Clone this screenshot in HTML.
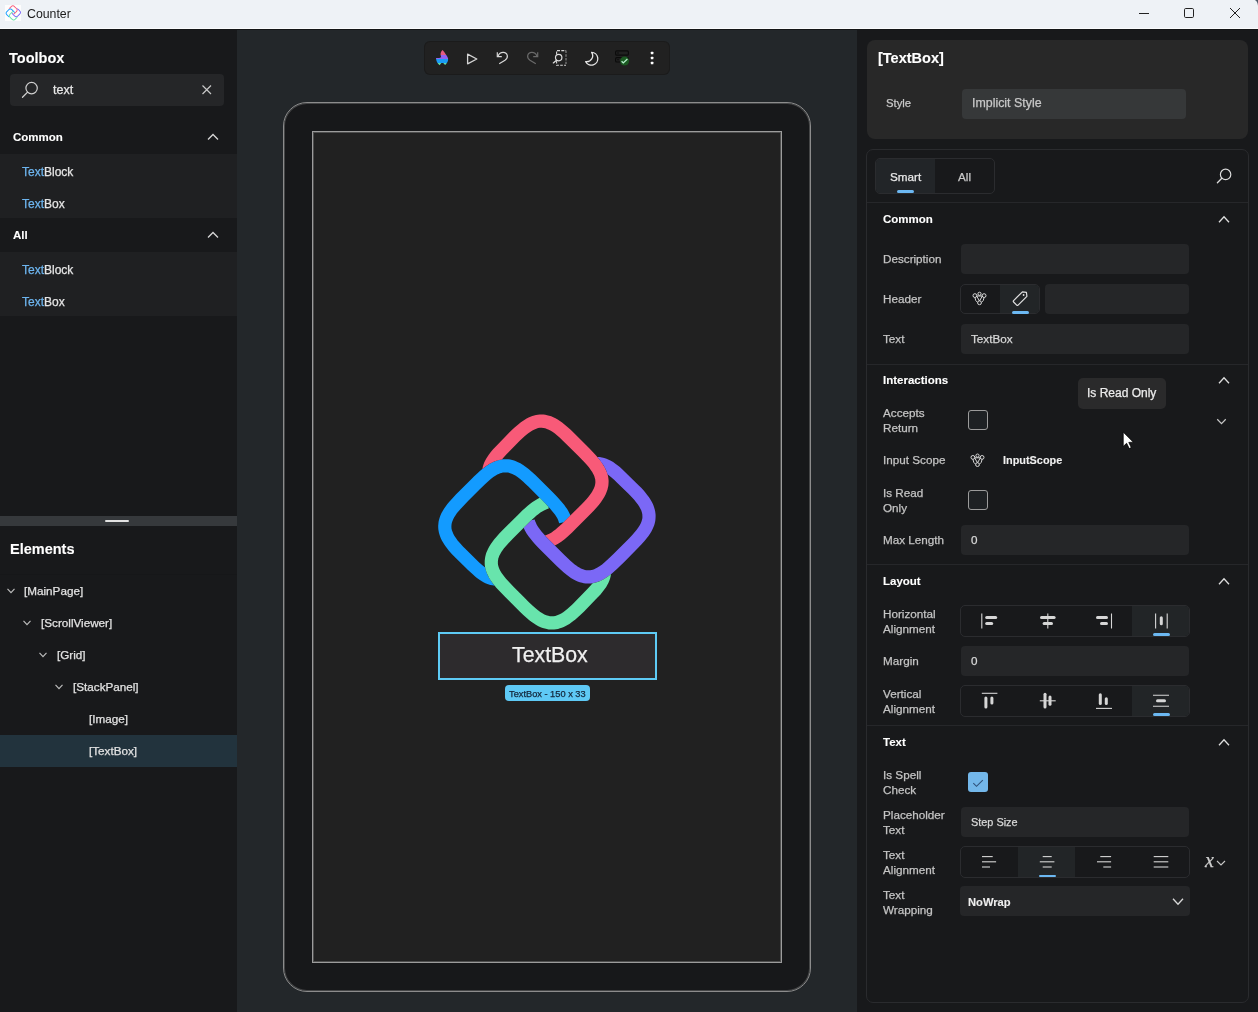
<!DOCTYPE html>
<html><head><meta charset="utf-8">
<style>
*{box-sizing:border-box;margin:0;padding:0}
html,body{width:1258px;height:1012px;overflow:hidden;background:#191a1c;font-family:"Liberation Sans",sans-serif;color:#e6e6e6;position:relative}
.a{position:absolute}
.t{position:absolute;white-space:nowrap;line-height:1;will-change:transform;-webkit-text-stroke:0.25px currentColor}
svg{position:absolute;overflow:visible}
</style></head><body>
<div class="a" style="left:0px;top:0px;width:1258px;height:29px;background:#eef2f6;border-radius:0px;"></div>
<div class="a" style="left:0px;top:28px;width:1258px;height:1px;background:#fafbfc;border-radius:0px;"></div>
<div class="a" style="left:0px;top:29px;width:237px;height:983px;background:#18191b;border-radius:0px;"></div>
<div class="a" style="left:237px;top:29px;width:620px;height:983px;background:#23272a;border-radius:0px;"></div>
<div class="a" style="left:857px;top:29px;width:401px;height:983px;background:#18191b;border-radius:0px;"></div>
<div class="a" style="left:0px;top:29px;width:1258px;height:1px;background:#131516;border-radius:0px;"></div>
<svg style="left:1250px;top:0px;" width="8" height="8" viewBox="1250 0 8 8"><path d="M1254.8 0 Q1257.6 1.2 1258 5.8 V0 Z" fill="#505a6a"/></svg>
<svg style="left:5px;top:5px;" width="16" height="16" viewBox="5 5 16 16"><rect x="5" y="5" width="16" height="16" fill="#fdfdfd"/><g transform="translate(5.6 5.2) scale(0.0705) translate(-438 -413)"><path d="M485.2 567.6L482.4 565.3L479.2 562.4L465.3 548.8L463.2 546.7L461.2 544.6L459.2 542.3L457.6 540.4L455.9 538.1L454.5 536.0L453.4 534.0L452.6 532.1L451.9 530.2L451.5 528.4L451.4 526.6L451.5 524.8L451.8 523.0L452.4 521.2L453.1 519.4L454.2 517.3L455.4 515.4L457.0 513.1L458.8 510.9L461.0 508.4L464.3 504.9L468.3 500.7L479.8 489.3L485.0 484.2L488.0 481.5L490.8 479.1L493.3 477.1L495.8 475.5L497.3 474.6L498.7 473.9L500.2 473.3L501.5 472.9L502.9 472.6L504.2 472.4L505.5 472.4L506.8 472.4L508.1 472.6L509.5 472.9L510.9 473.4L512.3 474.0L513.8 474.7L515.3 475.6L516.8 476.6L518.5 477.8L520.7 479.6L523.0 481.6L525.6 483.9L528.6 486.8L543.7 501.9L547.3 505.6L550.2 508.7L552.0 510.9L553.7 512.9L555.1 514.8L556.2 516.6L557.3 518.3L558.1 520.1L558.7 521.7L559.1 523.3L563.6 522.3L570.5 515.5L569.7 513.7L568.8 512.0L567.9 510.3L566.8 508.6L565.6 506.9L564.3 505.0L561.1 501.2L557.8 497.5L553.5 493.0L540.7 480.2L535.4 475.1L532.0 471.9L528.9 469.2L525.9 466.9L523.1 465.0L520.4 463.3L517.5 461.9L514.9 460.8L512.2 460.0L510.3 459.6L508.5 459.3L506.6 459.2L504.9 459.2L503.0 459.3L501.2 459.5L499.3 459.9L497.5 460.3L495.6 461.0L493.8 461.7L491.9 462.6L490.1 463.5L488.2 464.7L486.3 465.9L484.3 467.4L482.3 469.0L479.9 471.0L477.2 473.5L474.2 476.3L470.5 479.9L455.9 494.5L452.3 498.4L449.3 501.7L447.4 504.0L445.6 506.4L444.0 508.7L442.7 510.9L441.5 513.1L440.5 515.3L439.7 517.5L439.1 519.6L438.6 521.6L438.4 523.5L438.2 525.4L438.2 527.2L438.3 529.1L438.6 531.1L439.0 533.0L439.6 535.0L440.2 536.8L441.0 538.7L442.0 540.7L443.1 542.5L444.3 544.6L445.7 546.5L447.2 548.5L448.9 550.7L451.8 553.9L454.5 556.7L468.0 570.0L473.0 574.6L475.1 576.5L477.3 578.2L479.5 579.8L481.8 581.2L483.9 582.4L486.0 583.4L488.1 584.2L490.3 584.9L492.4 585.3L494.7 585.7L492.8 583.4L491.1 581.0L489.7 578.8L488.4 576.5L487.4 574.4L486.5 572.3L485.8 570.0L485.2 567.6Z" fill="#139bff"/><path d="M501.9 459.4L504.0 456.9L506.5 454.3L520.0 440.5L521.9 438.7L524.3 436.5L526.4 434.7L528.3 433.2L530.5 431.7L532.4 430.5L534.5 429.4L536.3 428.7L538.1 428.1L539.9 427.8L541.6 427.8L543.4 427.9L545.1 428.3L546.9 428.9L548.8 429.7L550.8 430.8L552.8 432.1L554.9 433.6L557.2 435.4L559.6 437.6L563.1 440.9L567.5 445.2L578.4 456.1L583.5 461.3L586.3 464.3L588.7 467.1L590.6 469.7L592.2 472.1L593.1 473.7L593.8 475.1L594.4 476.5L594.8 477.9L595.2 479.2L595.3 480.6L595.4 481.9L595.3 483.2L595.1 484.5L594.8 485.9L594.3 487.2L593.7 488.7L593.0 490.1L592.1 491.7L591.1 493.2L590.0 494.7L588.3 496.9L586.4 499.2L584.1 501.7L581.2 504.7L566.3 519.6L562.4 523.4L559.5 526.1L557.2 528.1L555.3 529.7L553.4 531.1L551.6 532.4L549.8 533.4L548.1 534.3L546.5 534.9L544.9 535.4L548.8 539.4L554.9 545.6L558.1 543.8L561.3 541.7L564.6 539.2L568.3 536.0L572.1 532.4L577.0 527.6L588.5 516.1L593.7 510.7L596.4 507.7L598.8 504.9L600.9 502.3L602.7 499.6L604.3 497.1L605.6 494.5L606.6 492.0L607.5 489.6L607.9 487.7L608.3 485.9L608.5 484.0L608.6 482.1L608.6 480.3L608.4 478.4L608.1 476.5L607.7 474.7L607.1 472.8L606.4 471.0L605.6 469.2L604.7 467.3L603.6 465.4L602.4 463.5L601.1 461.6L599.5 459.6L597.6 457.3L595.4 454.7L592.8 452.0L589.5 448.5L574.2 433.3L570.4 429.5L566.9 426.4L564.5 424.4L562.1 422.5L559.9 421.0L557.7 419.5L555.5 418.3L553.3 417.2L551.2 416.3L549.1 415.7L547.1 415.2L545.3 414.8L543.4 414.6L541.6 414.6L539.7 414.6L537.8 414.8L536.0 415.1L534.1 415.5L532.3 416.1L530.4 416.8L528.6 417.6L526.6 418.6L524.7 419.7L522.8 420.9L520.9 422.3L518.8 423.9L516.7 425.7L514.3 427.7L512.1 429.8L509.8 432.0L496.3 445.9L493.1 449.3L490.8 452.1L489.1 454.2L487.6 456.4L486.3 458.4L485.2 460.6L484.2 462.6L483.4 464.7L482.8 466.8L482.4 468.9L484.8 467.0L487.3 465.3L489.6 463.8L492.1 462.5L494.2 461.5L496.3 460.7L499.1 459.9L501.9 459.4Z" fill="#f85a78"/><path d="M607.5 474.3L610.9 476.9L614.1 479.8L616.6 482.2L628.0 493.2L630.2 495.5L632.1 497.5L634.4 500.0L636.1 502.2L637.9 504.5L639.2 506.6L640.4 508.7L641.3 510.6L641.9 512.5L642.3 514.3L642.4 516.1L642.4 517.9L642.0 519.7L641.5 521.6L640.7 523.4L639.6 525.5L638.3 527.5L636.7 529.7L634.8 532.1L632.5 534.7L629.0 538.4L624.5 543.0L613.2 554.3L608.2 559.1L604.9 562.1L602.1 564.4L599.5 566.3L597.0 567.8L595.5 568.6L594.2 569.2L592.8 569.7L591.5 570.0L590.2 570.2L588.9 570.3L587.6 570.3L586.3 570.2L585.0 569.9L583.7 569.5L582.3 569.0L580.9 568.4L579.4 567.6L577.9 566.7L576.3 565.6L574.7 564.4L572.7 562.7L570.4 560.8L567.8 558.3L564.9 555.5L549.8 540.5L546.3 536.9L543.5 533.8L541.7 531.7L540.0 529.6L538.7 527.8L537.5 526.0L536.5 524.2L535.8 522.6L535.1 521.0L534.7 519.4L521.8 522.3L531.4 520.2L523.6 527.8L524.9 530.5L526.6 533.4L528.5 536.2L530.7 539.1L532.9 541.7L535.3 544.4L538.1 547.4L541.6 551.0L556.7 565.9L560.5 569.5L563.8 572.5L566.3 574.5L568.6 576.3L570.9 577.9L573.1 579.2L575.5 580.4L577.6 581.4L579.8 582.2L582.0 582.8L583.8 583.2L585.7 583.4L587.6 583.5L589.3 583.5L591.2 583.4L593.0 583.1L594.9 582.8L596.7 582.3L598.6 581.6L600.4 580.9L602.2 580.0L604.1 579.0L606.0 577.8L607.9 576.5L609.9 575.1L611.9 573.4L614.4 571.3L617.2 568.8L620.3 565.8L624.5 561.7L638.2 547.8L641.8 544.1L644.7 540.8L646.7 538.3L648.5 536.0L650.0 533.7L651.4 531.5L652.5 529.3L653.5 527.1L654.3 524.9L654.9 522.7L655.3 520.7L655.5 518.7L655.6 516.8L655.6 514.8L655.4 512.9L655.1 510.9L654.6 508.9L654.0 506.9L653.3 505.0L652.4 503.0L651.3 501.0L650.1 499.0L648.8 497.0L647.2 494.9L645.5 492.8L643.7 490.6L641.2 487.8L638.8 485.4L625.0 471.9L622.2 469.2L619.8 467.1L617.5 465.2L615.4 463.7L613.1 462.1L610.9 460.8L608.7 459.7L606.5 458.8L604.2 458.0L602.0 457.5L599.7 457.1L597.3 456.9L599.1 459.1L600.9 461.4L602.3 463.4L603.7 465.5L604.7 467.4L605.7 469.2L606.7 471.8L607.5 474.3Z" fill="#7b68f6"/><path d="M592.6 583.2L590.2 586.0L587.4 589.1L573.8 603.1L571.8 605.0L569.5 607.1L567.3 609.0L565.4 610.5L563.2 612.2L561.2 613.4L559.1 614.5L557.2 615.3L555.3 615.9L553.5 616.3L551.7 616.3L550.0 616.2L548.2 615.8L546.3 615.2L544.4 614.4L542.4 613.3L540.3 611.9L538.0 610.2L535.6 608.2L533.0 606.0L529.2 602.4L523.8 597.0L513.5 586.7L508.6 581.6L505.8 578.5L503.5 575.6L501.6 573.0L500.1 570.4L499.4 569.0L498.9 567.7L498.4 566.3L498.1 565.0L497.9 563.8L497.9 562.5L497.9 561.2L498.1 559.9L498.3 558.6L498.8 557.3L499.3 555.8L500.0 554.4L500.8 553.1L501.7 551.6L502.8 549.9L504.0 548.3L505.8 546.2L507.8 543.9L513.0 538.4L527.7 523.7L531.3 520.2L534.4 517.4L536.5 515.6L538.6 513.9L540.4 512.6L542.2 511.4L544.0 510.4L545.6 509.7L547.2 509.0L548.8 508.6L545.9 495.7L548.4 506.7L544.8 503.0L539.7 497.8L537.4 499.0L535.0 500.4L532.5 502.0L530.2 503.7L527.7 505.7L525.2 508.0L522.3 510.6L518.9 513.9L503.2 529.5L499.3 533.6L496.3 537.0L494.1 539.6L492.3 542.0L490.7 544.3L489.3 546.5L488.1 548.7L487.1 550.9L486.2 553.1L485.6 555.3L485.2 557.1L484.9 559.0L484.7 560.8L484.7 562.7L484.7 564.5L485.0 566.4L485.3 568.2L485.8 570.1L486.4 571.9L487.1 573.8L488.0 575.6L488.9 577.5L490.1 579.4L491.3 581.3L492.7 583.2L494.3 585.3L496.3 587.7L498.7 590.3L505.0 596.8L519.7 611.5L523.6 615.3L527.0 618.2L529.3 620.2L531.7 622.0L534.0 623.6L536.2 625.0L538.4 626.2L540.6 627.2L542.7 628.0L544.8 628.6L546.8 629.1L548.6 629.4L550.5 629.5L552.4 629.5L554.2 629.4L556.1 629.2L558.0 628.9L560.0 628.3L561.8 627.7L563.7 627.0L565.7 626.0L567.5 625.0L569.4 623.9L571.3 622.6L573.3 621.1L575.4 619.5L577.6 617.5L580.1 615.3L584.1 611.4L597.5 597.6L600.5 594.4L603.0 591.3L604.7 589.1L606.2 586.9L607.4 584.8L608.5 582.7L609.4 580.6L610.1 578.5L610.6 576.4L611.0 574.1L608.6 576.0L606.4 577.5L604.1 579.0L601.8 580.2L599.7 581.2L597.6 582.0L595.1 582.7L592.6 583.2Z" fill="#68e4ac"/></g></svg>
<div class="t" style="left:27.00px;top:8.19px;font-size:12.3px;color:#1b1b1b;font-weight:normal;-webkit-text-stroke:0">Counter</div>
<svg style="left:1133px;top:6px;" width="20" height="12" viewBox="1133 6 20 12"><path d="M1139 13.5 H1149" stroke="#222" stroke-width="1"/></svg>
<svg style="left:1180px;top:4px;" width="20" height="20" viewBox="1180 4 20 20"><rect x="1184.5" y="8.5" width="9" height="9" rx="1.2" fill="none" stroke="#222" stroke-width="1"/></svg>
<svg style="left:1225px;top:4px;" width="20" height="20" viewBox="1225 4 20 20"><path d="M1230 8 L1240 18 M1240 8 L1230 18" stroke="#222" stroke-width="1"/></svg>
<div class="t" style="left:9.00px;top:50.63px;font-size:14.5px;color:#ffffff;font-weight:bold;-webkit-text-stroke:0.1px currentColor;">Toolbox</div>
<div class="a" style="left:10px;top:74px;width:214px;height:32px;background:#252628;border-radius:4px;"></div>
<svg style="left:18px;top:78px;" width="24" height="24" viewBox="18 78 24 24"><circle cx="31.6" cy="88.1" r="5.7" fill="none" stroke="#d0d0d0" stroke-width="1.2"/><path d="M27.6 92.1 L22.5 97.2" stroke="#d0d0d0" stroke-width="1.3" stroke-linecap="round"/></svg>
<div class="t" style="left:53.00px;top:83.62px;font-size:12.5px;color:#e8e8e8;font-weight:normal;">text</div>
<svg style="left:198px;top:81px;" width="18" height="18" viewBox="198 81 18 18"><path d="M202.5 85.5 L211 94 M211 85.5 L202.5 94" stroke="#c8c8c8" stroke-width="1.2"/></svg>
<div class="t" style="left:13.00px;top:132.27px;font-size:11.5px;color:#ffffff;font-weight:bold;-webkit-text-stroke:0.1px currentColor;">Common</div>
<svg style="left:203px;top:132px;" width="20" height="10" viewBox="203 132 20 10"><path d="M208.0 139.5 L213 134.5 L218.0 139.5" fill="none" stroke="#d6d6d6" stroke-width="1.3"/></svg>
<div class="a" style="left:0px;top:154px;width:237px;height:64px;background:#1f2022;border-radius:0px;"></div>
<div class="t" style="left:22.30px;top:165.84px;font-size:12px;color:#e6e6e6;font-weight:normal;"><span style="color:#6db5ef">Text</span>Block</div>
<div class="t" style="left:22.30px;top:197.84px;font-size:12px;color:#e6e6e6;font-weight:normal;"><span style="color:#6db5ef">Text</span>Box</div>
<div class="t" style="left:13.00px;top:230.27px;font-size:11.5px;color:#ffffff;font-weight:bold;-webkit-text-stroke:0.1px currentColor;">All</div>
<svg style="left:203px;top:230px;" width="20" height="10" viewBox="203 230 20 10"><path d="M208.0 237.5 L213 232.5 L218.0 237.5" fill="none" stroke="#d6d6d6" stroke-width="1.3"/></svg>
<div class="a" style="left:0px;top:252px;width:237px;height:64px;background:#1f2022;border-radius:0px;"></div>
<div class="t" style="left:22.30px;top:263.84px;font-size:12px;color:#e6e6e6;font-weight:normal;"><span style="color:#6db5ef">Text</span>Block</div>
<div class="t" style="left:22.30px;top:295.84px;font-size:12px;color:#e6e6e6;font-weight:normal;"><span style="color:#6db5ef">Text</span>Box</div>
<div class="a" style="left:0px;top:516px;width:237px;height:10px;background:#36393c;border-radius:0px;"></div>
<div class="a" style="left:105px;top:520px;width:24px;height:2px;background:#e2e2e2;border-radius:1px;"></div>
<div class="t" style="left:9.50px;top:541.53px;font-size:14.5px;color:#ffffff;font-weight:bold;-webkit-text-stroke:0.1px currentColor;">Elements</div>
<div class="a" style="left:0px;top:574px;width:237px;height:1px;background:#161719;border-radius:0px;"></div>
<div class="a" style="left:0px;top:735px;width:237px;height:32px;background:#22333d;border-radius:0px;"></div>
<div class="t" style="left:24.40px;top:584.70px;font-size:11.7px;color:#e2e2e2;font-weight:normal;">[MainPage]</div>
<svg style="left:3.799999999999999px;top:587.0000000000001px;" width="14" height="7.6" viewBox="3.799999999999999 587.0000000000001 14 7.6"><path d="M7.299999999999999 588.9000000000001 L10.799999999999999 592.7 L14.299999999999999 588.9000000000001" fill="none" stroke="#bdbdbd" stroke-width="1.15"/></svg>
<div class="t" style="left:41.00px;top:616.70px;font-size:11.7px;color:#e2e2e2;font-weight:normal;">[ScrollViewer]</div>
<svg style="left:20.4px;top:619.0000000000001px;" width="14" height="7.6" viewBox="20.4 619.0000000000001 14 7.6"><path d="M23.9 620.9000000000001 L27.4 624.7 L30.9 620.9000000000001" fill="none" stroke="#bdbdbd" stroke-width="1.15"/></svg>
<div class="t" style="left:57.00px;top:648.70px;font-size:11.7px;color:#e2e2e2;font-weight:normal;">[Grid]</div>
<svg style="left:36.4px;top:651.0000000000001px;" width="14" height="7.6" viewBox="36.4 651.0000000000001 14 7.6"><path d="M39.9 652.9000000000001 L43.4 656.7 L46.9 652.9000000000001" fill="none" stroke="#bdbdbd" stroke-width="1.15"/></svg>
<div class="t" style="left:73.00px;top:680.70px;font-size:11.7px;color:#e2e2e2;font-weight:normal;">[StackPanel]</div>
<svg style="left:52.4px;top:683.0000000000001px;" width="14" height="7.6" viewBox="52.4 683.0000000000001 14 7.6"><path d="M55.9 684.9000000000001 L59.4 688.7 L62.9 684.9000000000001" fill="none" stroke="#bdbdbd" stroke-width="1.15"/></svg>
<div class="t" style="left:89.00px;top:712.70px;font-size:11.7px;color:#e2e2e2;font-weight:normal;">[Image]</div>
<div class="t" style="left:89.00px;top:744.70px;font-size:11.7px;color:#e2e2e2;font-weight:normal;">[TextBox]</div>
<div class="a" style="left:424px;top:41px;width:246px;height:34px;background:#1b1b1b;border-radius:6px;"></div>
<div class="a" style="left:425px;top:42px;width:244px;height:32px;background:#212121;border-radius:5px;"></div>
<svg style="left:430px;top:44px;" width="240" height="28" viewBox="430 44 240 28">
<defs><linearGradient id="fl" x1="0" y1="50" x2="0" y2="65.5" gradientUnits="userSpaceOnUse">
<stop offset="0" stop-color="#e55a80"/><stop offset="0.3" stop-color="#e55a80"/><stop offset="0.3" stop-color="#8f62f2"/><stop offset="0.56" stop-color="#8f62f2"/><stop offset="0.56" stop-color="#1a9cf6"/><stop offset="0.85" stop-color="#1a9cf6"/><stop offset="0.85" stop-color="#60dca4"/><stop offset="1" stop-color="#60dca4"/></linearGradient></defs>
<path d="M442.6 50 C441.2 51.4 440.2 53.2 440.6 55 L441.2 57.2 C439.8 57.9 437.8 58.2 436 58 C436.2 61 437.4 63.6 439.6 65.3 L441.4 63.1 L443.2 63 L445.1 65 C447.2 63.4 448.4 61.2 448.1 58.6 C447.7 56.2 445.6 54.3 444.6 52.4 Z" fill="url(#fl)"/>
<path d="M467.6 54.2 L476.8 59 L467.6 63.8 Z" fill="none" stroke="#d4d4d4" stroke-width="1.3" stroke-linejoin="round"/>
<path d="M497.3 52.2 V56.6 H501.8" fill="none" stroke="#d8d8d8" stroke-width="1.2"/>
<path d="M498.1 55.9 C500 51.4 506.2 51 507.3 55.6 C507.7 57.5 506.6 59.1 505 60.3 L499.2 63.8" fill="none" stroke="#d8d8d8" stroke-width="1.2"/>
<path d="M537.7 52.2 V56.6 H533.2" fill="none" stroke="#6a6a6a" stroke-width="1.2"/>
<path d="M536.9 55.9 C535 51.4 528.8 51 527.7 55.6 C527.3 57.5 528.4 59.1 530 60.3 L535.8 63.8" fill="none" stroke="#6a6a6a" stroke-width="1.2"/>
<path d="M556.6 54.5 V50.6 H566" fill="none" stroke="#d4d4d4" stroke-width="1.1" stroke-dasharray="3 1.3"/>
<path d="M566 50.6 V65.2" fill="none" stroke="#8a8a8a" stroke-width="1.1" stroke-dasharray="2.4 1.3"/>
<path d="M556.6 61 V65.2 H566" fill="none" stroke="#d4d4d4" stroke-width="1.1" stroke-dasharray="2.6 1.3"/>
<circle cx="558.7" cy="57.6" r="3.2" fill="#212121" stroke="#dcdcdc" stroke-width="1.2"/>
<path d="M556.5 60.2 L553.3 62.9" stroke="#dcdcdc" stroke-width="1.3" stroke-linecap="round"/>
<path d="M591.6 52.3 A6.4 6.4 0 1 1 585.7 61.6 A6 6 0 0 0 591.6 52.3 Z" fill="none" stroke="#e6e6e6" stroke-width="1.3" stroke-linejoin="round"/>
<rect x="615.6" y="50.8" width="12.8" height="4.4" rx="1.3" fill="none" stroke="#0b0b0b" stroke-width="1.2"/>
<rect x="615.6" y="57.6" width="12.8" height="4.4" rx="1.3" fill="none" stroke="#0b0b0b" stroke-width="1.2"/>
<circle cx="618" cy="53" r="0.8" fill="#0b0b0b"/><circle cx="618" cy="59.8" r="0.8" fill="#0b0b0b"/>
<circle cx="624.6" cy="61" r="4.5" fill="#1b5a22"/>
<path d="M621.6 61.2 L623.3 62.9 L627.4 59.1" fill="none" stroke="#b8f0d0" stroke-width="1.3"/>
<rect x="650.8" y="51.7" width="2.6" height="2.6" rx="0.5" fill="#fff"/>
<rect x="650.8" y="56.7" width="2.6" height="2.6" rx="0.5" fill="#fff"/>
<rect x="650.8" y="61.7" width="2.6" height="2.6" rx="0.5" fill="#fff"/>
</svg>
<div class="a" style="left:283px;top:102px;width:528px;height:890px;border:1px solid #8c8c8c;border-radius:24px;background:#17181a;box-shadow:inset 0 0 0 1px #454647"></div>
<div class="a" style="left:312px;top:131px;width:470px;height:832px;border:1px solid #9c9c9c;background:#212121;box-shadow:inset 0 0 0 1px #4e4e4e"></div>
<svg style="left:420px;top:400px;" width="260" height="250" viewBox="420 400 260 250"><path d="M485.2 567.6L482.4 565.3L479.2 562.4L465.3 548.8L463.2 546.7L461.2 544.6L459.2 542.3L457.6 540.4L455.9 538.1L454.5 536.0L453.4 534.0L452.6 532.1L451.9 530.2L451.5 528.4L451.4 526.6L451.5 524.8L451.8 523.0L452.4 521.2L453.1 519.4L454.2 517.3L455.4 515.4L457.0 513.1L458.8 510.9L461.0 508.4L464.3 504.9L468.3 500.7L479.8 489.3L485.0 484.2L488.0 481.5L490.8 479.1L493.3 477.1L495.8 475.5L497.3 474.6L498.7 473.9L500.2 473.3L501.5 472.9L502.9 472.6L504.2 472.4L505.5 472.4L506.8 472.4L508.1 472.6L509.5 472.9L510.9 473.4L512.3 474.0L513.8 474.7L515.3 475.6L516.8 476.6L518.5 477.8L520.7 479.6L523.0 481.6L525.6 483.9L528.6 486.8L543.7 501.9L547.3 505.6L550.2 508.7L552.0 510.9L553.7 512.9L555.1 514.8L556.2 516.6L557.3 518.3L558.1 520.1L558.7 521.7L559.1 523.3L563.6 522.3L570.5 515.5L569.7 513.7L568.8 512.0L567.9 510.3L566.8 508.6L565.6 506.9L564.3 505.0L561.1 501.2L557.8 497.5L553.5 493.0L540.7 480.2L535.4 475.1L532.0 471.9L528.9 469.2L525.9 466.9L523.1 465.0L520.4 463.3L517.5 461.9L514.9 460.8L512.2 460.0L510.3 459.6L508.5 459.3L506.6 459.2L504.9 459.2L503.0 459.3L501.2 459.5L499.3 459.9L497.5 460.3L495.6 461.0L493.8 461.7L491.9 462.6L490.1 463.5L488.2 464.7L486.3 465.9L484.3 467.4L482.3 469.0L479.9 471.0L477.2 473.5L474.2 476.3L470.5 479.9L455.9 494.5L452.3 498.4L449.3 501.7L447.4 504.0L445.6 506.4L444.0 508.7L442.7 510.9L441.5 513.1L440.5 515.3L439.7 517.5L439.1 519.6L438.6 521.6L438.4 523.5L438.2 525.4L438.2 527.2L438.3 529.1L438.6 531.1L439.0 533.0L439.6 535.0L440.2 536.8L441.0 538.7L442.0 540.7L443.1 542.5L444.3 544.6L445.7 546.5L447.2 548.5L448.9 550.7L451.8 553.9L454.5 556.7L468.0 570.0L473.0 574.6L475.1 576.5L477.3 578.2L479.5 579.8L481.8 581.2L483.9 582.4L486.0 583.4L488.1 584.2L490.3 584.9L492.4 585.3L494.7 585.7L492.8 583.4L491.1 581.0L489.7 578.8L488.4 576.5L487.4 574.4L486.5 572.3L485.8 570.0L485.2 567.6Z" fill="#139bff"/><path d="M501.9 459.4L504.0 456.9L506.5 454.3L520.0 440.5L521.9 438.7L524.3 436.5L526.4 434.7L528.3 433.2L530.5 431.7L532.4 430.5L534.5 429.4L536.3 428.7L538.1 428.1L539.9 427.8L541.6 427.8L543.4 427.9L545.1 428.3L546.9 428.9L548.8 429.7L550.8 430.8L552.8 432.1L554.9 433.6L557.2 435.4L559.6 437.6L563.1 440.9L567.5 445.2L578.4 456.1L583.5 461.3L586.3 464.3L588.7 467.1L590.6 469.7L592.2 472.1L593.1 473.7L593.8 475.1L594.4 476.5L594.8 477.9L595.2 479.2L595.3 480.6L595.4 481.9L595.3 483.2L595.1 484.5L594.8 485.9L594.3 487.2L593.7 488.7L593.0 490.1L592.1 491.7L591.1 493.2L590.0 494.7L588.3 496.9L586.4 499.2L584.1 501.7L581.2 504.7L566.3 519.6L562.4 523.4L559.5 526.1L557.2 528.1L555.3 529.7L553.4 531.1L551.6 532.4L549.8 533.4L548.1 534.3L546.5 534.9L544.9 535.4L548.8 539.4L554.9 545.6L558.1 543.8L561.3 541.7L564.6 539.2L568.3 536.0L572.1 532.4L577.0 527.6L588.5 516.1L593.7 510.7L596.4 507.7L598.8 504.9L600.9 502.3L602.7 499.6L604.3 497.1L605.6 494.5L606.6 492.0L607.5 489.6L607.9 487.7L608.3 485.9L608.5 484.0L608.6 482.1L608.6 480.3L608.4 478.4L608.1 476.5L607.7 474.7L607.1 472.8L606.4 471.0L605.6 469.2L604.7 467.3L603.6 465.4L602.4 463.5L601.1 461.6L599.5 459.6L597.6 457.3L595.4 454.7L592.8 452.0L589.5 448.5L574.2 433.3L570.4 429.5L566.9 426.4L564.5 424.4L562.1 422.5L559.9 421.0L557.7 419.5L555.5 418.3L553.3 417.2L551.2 416.3L549.1 415.7L547.1 415.2L545.3 414.8L543.4 414.6L541.6 414.6L539.7 414.6L537.8 414.8L536.0 415.1L534.1 415.5L532.3 416.1L530.4 416.8L528.6 417.6L526.6 418.6L524.7 419.7L522.8 420.9L520.9 422.3L518.8 423.9L516.7 425.7L514.3 427.7L512.1 429.8L509.8 432.0L496.3 445.9L493.1 449.3L490.8 452.1L489.1 454.2L487.6 456.4L486.3 458.4L485.2 460.6L484.2 462.6L483.4 464.7L482.8 466.8L482.4 468.9L484.8 467.0L487.3 465.3L489.6 463.8L492.1 462.5L494.2 461.5L496.3 460.7L499.1 459.9L501.9 459.4Z" fill="#f85a78"/><path d="M607.5 474.3L610.9 476.9L614.1 479.8L616.6 482.2L628.0 493.2L630.2 495.5L632.1 497.5L634.4 500.0L636.1 502.2L637.9 504.5L639.2 506.6L640.4 508.7L641.3 510.6L641.9 512.5L642.3 514.3L642.4 516.1L642.4 517.9L642.0 519.7L641.5 521.6L640.7 523.4L639.6 525.5L638.3 527.5L636.7 529.7L634.8 532.1L632.5 534.7L629.0 538.4L624.5 543.0L613.2 554.3L608.2 559.1L604.9 562.1L602.1 564.4L599.5 566.3L597.0 567.8L595.5 568.6L594.2 569.2L592.8 569.7L591.5 570.0L590.2 570.2L588.9 570.3L587.6 570.3L586.3 570.2L585.0 569.9L583.7 569.5L582.3 569.0L580.9 568.4L579.4 567.6L577.9 566.7L576.3 565.6L574.7 564.4L572.7 562.7L570.4 560.8L567.8 558.3L564.9 555.5L549.8 540.5L546.3 536.9L543.5 533.8L541.7 531.7L540.0 529.6L538.7 527.8L537.5 526.0L536.5 524.2L535.8 522.6L535.1 521.0L534.7 519.4L521.8 522.3L531.4 520.2L523.6 527.8L524.9 530.5L526.6 533.4L528.5 536.2L530.7 539.1L532.9 541.7L535.3 544.4L538.1 547.4L541.6 551.0L556.7 565.9L560.5 569.5L563.8 572.5L566.3 574.5L568.6 576.3L570.9 577.9L573.1 579.2L575.5 580.4L577.6 581.4L579.8 582.2L582.0 582.8L583.8 583.2L585.7 583.4L587.6 583.5L589.3 583.5L591.2 583.4L593.0 583.1L594.9 582.8L596.7 582.3L598.6 581.6L600.4 580.9L602.2 580.0L604.1 579.0L606.0 577.8L607.9 576.5L609.9 575.1L611.9 573.4L614.4 571.3L617.2 568.8L620.3 565.8L624.5 561.7L638.2 547.8L641.8 544.1L644.7 540.8L646.7 538.3L648.5 536.0L650.0 533.7L651.4 531.5L652.5 529.3L653.5 527.1L654.3 524.9L654.9 522.7L655.3 520.7L655.5 518.7L655.6 516.8L655.6 514.8L655.4 512.9L655.1 510.9L654.6 508.9L654.0 506.9L653.3 505.0L652.4 503.0L651.3 501.0L650.1 499.0L648.8 497.0L647.2 494.9L645.5 492.8L643.7 490.6L641.2 487.8L638.8 485.4L625.0 471.9L622.2 469.2L619.8 467.1L617.5 465.2L615.4 463.7L613.1 462.1L610.9 460.8L608.7 459.7L606.5 458.8L604.2 458.0L602.0 457.5L599.7 457.1L597.3 456.9L599.1 459.1L600.9 461.4L602.3 463.4L603.7 465.5L604.7 467.4L605.7 469.2L606.7 471.8L607.5 474.3Z" fill="#7b68f6"/><path d="M592.6 583.2L590.2 586.0L587.4 589.1L573.8 603.1L571.8 605.0L569.5 607.1L567.3 609.0L565.4 610.5L563.2 612.2L561.2 613.4L559.1 614.5L557.2 615.3L555.3 615.9L553.5 616.3L551.7 616.3L550.0 616.2L548.2 615.8L546.3 615.2L544.4 614.4L542.4 613.3L540.3 611.9L538.0 610.2L535.6 608.2L533.0 606.0L529.2 602.4L523.8 597.0L513.5 586.7L508.6 581.6L505.8 578.5L503.5 575.6L501.6 573.0L500.1 570.4L499.4 569.0L498.9 567.7L498.4 566.3L498.1 565.0L497.9 563.8L497.9 562.5L497.9 561.2L498.1 559.9L498.3 558.6L498.8 557.3L499.3 555.8L500.0 554.4L500.8 553.1L501.7 551.6L502.8 549.9L504.0 548.3L505.8 546.2L507.8 543.9L513.0 538.4L527.7 523.7L531.3 520.2L534.4 517.4L536.5 515.6L538.6 513.9L540.4 512.6L542.2 511.4L544.0 510.4L545.6 509.7L547.2 509.0L548.8 508.6L545.9 495.7L548.4 506.7L544.8 503.0L539.7 497.8L537.4 499.0L535.0 500.4L532.5 502.0L530.2 503.7L527.7 505.7L525.2 508.0L522.3 510.6L518.9 513.9L503.2 529.5L499.3 533.6L496.3 537.0L494.1 539.6L492.3 542.0L490.7 544.3L489.3 546.5L488.1 548.7L487.1 550.9L486.2 553.1L485.6 555.3L485.2 557.1L484.9 559.0L484.7 560.8L484.7 562.7L484.7 564.5L485.0 566.4L485.3 568.2L485.8 570.1L486.4 571.9L487.1 573.8L488.0 575.6L488.9 577.5L490.1 579.4L491.3 581.3L492.7 583.2L494.3 585.3L496.3 587.7L498.7 590.3L505.0 596.8L519.7 611.5L523.6 615.3L527.0 618.2L529.3 620.2L531.7 622.0L534.0 623.6L536.2 625.0L538.4 626.2L540.6 627.2L542.7 628.0L544.8 628.6L546.8 629.1L548.6 629.4L550.5 629.5L552.4 629.5L554.2 629.4L556.1 629.2L558.0 628.9L560.0 628.3L561.8 627.7L563.7 627.0L565.7 626.0L567.5 625.0L569.4 623.9L571.3 622.6L573.3 621.1L575.4 619.5L577.6 617.5L580.1 615.3L584.1 611.4L597.5 597.6L600.5 594.4L603.0 591.3L604.7 589.1L606.2 586.9L607.4 584.8L608.5 582.7L609.4 580.6L610.1 578.5L610.6 576.4L611.0 574.1L608.6 576.0L606.4 577.5L604.1 579.0L601.8 580.2L599.7 581.2L597.6 582.0L595.1 582.7L592.6 583.2Z" fill="#68e4ac"/></svg>
<div class="a" style="left:438px;top:632px;width:219px;height:48px;border:2px solid #5ecbf5;background:#2d2b2d"></div>
<div class="t" style="left:511.50px;top:644.77px;font-size:21.3px;color:#f0f0f0;font-weight:normal;">TextBox</div>
<div class="a" style="left:505px;top:685px;width:85px;height:16px;background:#5ec9f5;border-radius:4px;"></div>
<div class="t" style="left:509.00px;top:689.97px;font-size:9.25px;color:#13263a;font-weight:normal;">TextBox - 150 x 33</div>
<div class="a" style="left:867px;top:40px;width:381px;height:99px;background:#282828;border-radius:8px;"></div>
<div class="t" style="left:878.20px;top:50.73px;font-size:14.5px;color:#ffffff;font-weight:bold;-webkit-text-stroke:0.1px currentColor;">[TextBox]</div>
<div class="t" style="left:886.00px;top:98.43px;font-size:11.3px;color:#c9c9c9;font-weight:normal;">Style</div>
<div class="a" style="left:962px;top:89px;width:224px;height:30px;background:#363839;border-radius:4px;"></div>
<div class="t" style="left:971.70px;top:97.30px;font-size:12.4px;color:#c8c8c8;font-weight:normal;">Implicit Style</div>
<div class="a" style="left:866px;top:149px;width:383px;height:854px;border:1px solid #2a2b2e;border-radius:7px"></div>
<div class="a" style="left:875px;top:158px;width:120px;height:36px;border:1px solid #2b2c2f;border-radius:5px;background:#18191b;overflow:hidden"><div class="a" style="left:0;top:0;width:59px;height:34px;background:#222528"></div></div>
<div class="t" style="left:889.80px;top:171.10px;font-size:11.7px;color:#e8e8e8;font-weight:normal;">Smart</div>
<div class="t" style="left:958.30px;top:171.10px;font-size:11.7px;color:#c8c8c8;font-weight:normal;">All</div>
<div class="a" style="left:896.6px;top:190px;width:17.699999999999932px;height:3px;background:#6cb8f2;border-radius:1.5px;"></div>
<svg style="left:1212px;top:166px;" width="20" height="20" viewBox="1212 166 20 20"><circle cx="1225.6" cy="174.4" r="5.2" fill="none" stroke="#dcdcdc" stroke-width="1.2"/><path d="M1221.8 178.3 L1217.4 182.7" stroke="#dcdcdc" stroke-width="1.3" stroke-linecap="round"/></svg>
<div class="a" style="left:867px;top:202px;width:381px;height:1px;background:#26272a;border-radius:0px;"></div>
<div class="a" style="left:867px;top:364px;width:381px;height:1px;background:#26272a;border-radius:0px;"></div>
<div class="a" style="left:867px;top:564px;width:381px;height:1px;background:#26272a;border-radius:0px;"></div>
<div class="a" style="left:867px;top:725px;width:381px;height:1px;background:#26272a;border-radius:0px;"></div>
<div class="t" style="left:883.00px;top:214.27px;font-size:11.5px;color:#ffffff;font-weight:bold;-webkit-text-stroke:0.1px currentColor;">Common</div>
<svg style="left:1214px;top:213.5px;" width="20" height="11.0" viewBox="1214 213.5 20 11.0"><path d="M1219.0 221.75 L1224 216.25 L1229.0 221.75" fill="none" stroke="#dedede" stroke-width="1.3"/></svg>
<div class="t" style="left:883.00px;top:253.10px;font-size:11.7px;color:#c4c4c4;font-weight:normal;">Description</div>
<div class="a" style="left:961px;top:244px;width:228px;height:30px;background:#252628;border-radius:4px;"></div>
<div class="t" style="left:883.00px;top:293.10px;font-size:11.7px;color:#c4c4c4;font-weight:normal;">Header</div>
<div class="a" style="left:960px;top:284px;width:80px;height:30px;border:1px solid #2b2c2f;border-radius:5px;background:#18191b;overflow:hidden"><div class="a" style="left:39px;top:0;width:40px;height:28px;background:#222527"></div></div>
<div class="a" style="left:1012px;top:311px;width:17px;height:3px;background:#6cb8f2;border-radius:1.5px;"></div>
<div class="a" style="left:1045px;top:284px;width:144px;height:30px;background:#252628;border-radius:4px;"></div>
<div class="t" style="left:883.00px;top:333.10px;font-size:11.7px;color:#c4c4c4;font-weight:normal;">Text</div>
<div class="a" style="left:961px;top:324px;width:228px;height:30px;background:#252628;border-radius:4px;"></div>
<div class="t" style="left:971.00px;top:333.30px;font-size:11.7px;color:#d8d8d8;font-weight:normal;">TextBox</div>
<svg style="left:968px;top:288px;" width="24" height="22" viewBox="968 288 24 22"><g fill="none" stroke="#d8d8d8" stroke-width="1"><circle cx="974.9" cy="295.59999999999997" r="1.9"/><circle cx="984.1" cy="295.59999999999997" r="1.9"/><circle cx="979.5" cy="302.8" r="1.9"/><circle cx="979.5" cy="293.8" r="1.6"/><path d="M976.6 296.0 L979.5 301.0 L982.4 296.0 Z"/><path d="M974.9 297.5 Q975.3 301.2 977.7 302.5 M984.1 297.5 Q983.7 301.2 981.3 302.5"/></g></svg>
<svg style="left:1008px;top:288px;" width="24" height="22" viewBox="1008 288 24 22"><path d="M1013.6 300.6 L1022.4 291.8 L1026.4 292.3 L1026.9 296.3 L1018.1 305.1 Q1017.4 305.8 1016.7 305.1 L1013.6 302 Q1012.9 301.3 1013.6 300.6 Z" fill="none" stroke="#e0e0e0" stroke-width="1.2" stroke-linejoin="round"/><circle cx="1023.6" cy="295" r="0.9" fill="#e0e0e0"/></svg>
<div class="t" style="left:883.00px;top:375.27px;font-size:11.5px;color:#ffffff;font-weight:bold;-webkit-text-stroke:0.1px currentColor;">Interactions</div>
<svg style="left:1214px;top:374.5px;" width="20" height="11.0" viewBox="1214 374.5 20 11.0"><path d="M1219.0 382.75 L1224 377.25 L1229.0 382.75" fill="none" stroke="#dedede" stroke-width="1.3"/></svg>
<div class="t" style="left:883.00px;top:406.80px;font-size:11.7px;color:#c4c4c4;font-weight:normal;">Accepts</div>
<div class="t" style="left:883.00px;top:421.80px;font-size:11.7px;color:#c4c4c4;font-weight:normal;">Return</div>
<div class="a" style="left:968px;top:410px;width:20px;height:20px;border:1px solid #9c9c9c;border-radius:3px;background:#1e2124"></div>
<svg style="left:1212.5px;top:416.5px;" width="17.0" height="9.0" viewBox="1212.5 416.5 17.0 9.0"><path d="M1216.75 418.75 L1221 423.25 L1225.25 418.75" fill="none" stroke="#c8c8c8" stroke-width="1.2"/></svg>
<div class="t" style="left:883.00px;top:454.10px;font-size:11.7px;color:#c4c4c4;font-weight:normal;">Input Scope</div>
<svg style="left:966px;top:448px;" width="24" height="24" viewBox="966 448 24 24"><g fill="none" stroke="#d8d8d8" stroke-width="1"><circle cx="972.9" cy="457.4" r="1.9"/><circle cx="982.1" cy="457.4" r="1.9"/><circle cx="977.5" cy="464.6" r="1.9"/><circle cx="977.5" cy="455.6" r="1.6"/><path d="M974.6 457.8 L977.5 462.8 L980.4 457.8 Z"/><path d="M972.9 459.3 Q973.3 463 975.7 464.3 M982.1 459.3 Q981.7 463 979.3 464.3"/></g></svg>
<div class="t" style="left:1002.70px;top:454.77px;font-size:10.9px;color:#f0f0f0;font-weight:bold;-webkit-text-stroke:0.1px currentColor;">InputScope</div>
<div class="t" style="left:883.00px;top:487.10px;font-size:11.7px;color:#c4c4c4;font-weight:normal;">Is Read</div>
<div class="t" style="left:883.00px;top:502.10px;font-size:11.7px;color:#c4c4c4;font-weight:normal;">Only</div>
<div class="a" style="left:968px;top:490px;width:20px;height:20px;border:1px solid #9c9c9c;border-radius:3px;background:#1e2124"></div>
<div class="t" style="left:883.00px;top:534.10px;font-size:11.7px;color:#c4c4c4;font-weight:normal;">Max Length</div>
<div class="a" style="left:961px;top:525px;width:228px;height:30px;background:#252628;border-radius:4px;"></div>
<div class="t" style="left:971.00px;top:534.30px;font-size:11.7px;color:#d8d8d8;font-weight:normal;">0</div>
<div class="a" style="left:1078px;top:378px;width:88px;height:31px;background:#2a2a2b;border-radius:5px;"></div>
<div class="t" style="left:1087.30px;top:386.84px;font-size:12px;color:#ececec;font-weight:normal;">Is Read Only</div>
<div class="t" style="left:883.00px;top:576.27px;font-size:11.5px;color:#ffffff;font-weight:bold;-webkit-text-stroke:0.1px currentColor;">Layout</div>
<svg style="left:1214px;top:575.5px;" width="20" height="11.0" viewBox="1214 575.5 20 11.0"><path d="M1219.0 583.75 L1224 578.25 L1229.0 583.75" fill="none" stroke="#dedede" stroke-width="1.3"/></svg>
<div class="t" style="left:883.00px;top:608.10px;font-size:11.7px;color:#c4c4c4;font-weight:normal;">Horizontal</div>
<div class="t" style="left:883.00px;top:623.10px;font-size:11.7px;color:#c4c4c4;font-weight:normal;">Alignment</div>
<div class="a" style="left:960px;top:605px;width:230px;height:32px;border:1px solid #2b2c2f;border-radius:5px;background:#18191b;overflow:hidden"><div class="a" style="left:171.0px;top:0;width:57.0px;height:30px;background:#222527"></div></div>
<svg style="left:960px;top:605px;" width="230" height="32" viewBox="960 605 230 32"><path d="M981.8 613.5 V628.5" stroke="#d6d6d6" stroke-width="1.1"/><rect x="985.2" y="616" width="12" height="3" rx="1.5" fill="#d6d6d6"/><rect x="985.2" y="622" width="8" height="3" rx="1.5" fill="#d6d6d6"/><path d="M1047.8 613.5 V628.5" stroke="#d6d6d6" stroke-width="1.1"/><rect x="1040" y="616" width="15.6" height="3" rx="1.5" fill="#d6d6d6"/><rect x="1042.6" y="622" width="10.4" height="3" rx="1.5" fill="#d6d6d6"/><path d="M1111.5 613.5 V628.5" stroke="#d6d6d6" stroke-width="1.1"/><rect x="1096" y="616" width="12" height="3" rx="1.5" fill="#d6d6d6"/><rect x="1100" y="622" width="8" height="3" rx="1.5" fill="#d6d6d6"/><path d="M1155.6 613.5 V628.5 M1167.2 613.5 V628.5" stroke="#d6d6d6" stroke-width="1.1"/><rect x="1159.8" y="616.3" width="3" height="9" rx="1.5" fill="#d6d6d6"/></svg>
<div class="a" style="left:1153.3px;top:633px;width:16.700000000000045px;height:3px;background:#6cb8f2;border-radius:1.5px;"></div>
<div class="t" style="left:883.00px;top:655.10px;font-size:11.7px;color:#c4c4c4;font-weight:normal;">Margin</div>
<div class="a" style="left:961px;top:646px;width:228px;height:30px;background:#252628;border-radius:4px;"></div>
<div class="t" style="left:971.00px;top:655.30px;font-size:11.7px;color:#d8d8d8;font-weight:normal;">0</div>
<div class="t" style="left:883.00px;top:688.10px;font-size:11.7px;color:#c4c4c4;font-weight:normal;">Vertical</div>
<div class="t" style="left:883.00px;top:703.10px;font-size:11.7px;color:#c4c4c4;font-weight:normal;">Alignment</div>
<div class="a" style="left:960px;top:685px;width:230px;height:32px;border:1px solid #2b2c2f;border-radius:5px;background:#18191b;overflow:hidden"><div class="a" style="left:171.0px;top:0;width:57.0px;height:30px;background:#222527"></div></div>
<svg style="left:960px;top:685px;" width="230" height="32" viewBox="960 685 230 32"><path d="M981.8 693.3 H997.4" stroke="#d6d6d6" stroke-width="1.1"/><rect x="984.4" y="696.5" width="3" height="12" rx="1.5" fill="#d6d6d6"/><rect x="990.4" y="696.5" width="3" height="8" rx="1.5" fill="#d6d6d6"/><path d="M1039.8 700.8 H1055.7" stroke="#d6d6d6" stroke-width="1.1"/><rect x="1043.5" y="692.8" width="3" height="15.8" rx="1.5" fill="#d6d6d6"/><rect x="1048.5" y="695.4" width="3" height="10.4" rx="1.5" fill="#d6d6d6"/><path d="M1096 708.4 H1112" stroke="#d6d6d6" stroke-width="1.1"/><rect x="1098.8" y="693.2" width="3" height="11.8" rx="1.5" fill="#d6d6d6"/><rect x="1104.8" y="697.2" width="3" height="7.8" rx="1.5" fill="#d6d6d6"/><path d="M1153 695.3 H1169 M1153 706.3 H1169" stroke="#d6d6d6" stroke-width="1.1"/><rect x="1156" y="699.3" width="10" height="3" rx="1.5" fill="#d6d6d6"/></svg>
<div class="a" style="left:1153.3px;top:713px;width:16.700000000000045px;height:3px;background:#6cb8f2;border-radius:1.5px;"></div>
<div class="t" style="left:883.00px;top:737.27px;font-size:11.5px;color:#ffffff;font-weight:bold;-webkit-text-stroke:0.1px currentColor;">Text</div>
<svg style="left:1214px;top:736.5px;" width="20" height="11.0" viewBox="1214 736.5 20 11.0"><path d="M1219.0 744.75 L1224 739.25 L1229.0 744.75" fill="none" stroke="#dedede" stroke-width="1.3"/></svg>
<div class="t" style="left:883.00px;top:769.10px;font-size:11.7px;color:#c4c4c4;font-weight:normal;">Is Spell</div>
<div class="t" style="left:883.00px;top:784.10px;font-size:11.7px;color:#c4c4c4;font-weight:normal;">Check</div>
<div class="a" style="left:968px;top:772px;width:20px;height:20px;background:#73b7ea;border-radius:3px;"></div>
<svg style="left:968px;top:772px;" width="20" height="20" viewBox="968 772 20 20"><path d="M973.3 783.2 L976.5 786.3 L982.8 780.2" fill="none" stroke="#30527a" stroke-width="1.1"/></svg>
<div class="t" style="left:883.00px;top:809.10px;font-size:11.7px;color:#c4c4c4;font-weight:normal;">Placeholder</div>
<div class="t" style="left:883.00px;top:824.10px;font-size:11.7px;color:#c4c4c4;font-weight:normal;">Text</div>
<div class="a" style="left:961px;top:807px;width:228px;height:30px;background:#252628;border-radius:4px;"></div>
<div class="t" style="left:971.00px;top:816.97px;font-size:10.9px;color:#d8d8d8;font-weight:normal;">Step Size</div>
<div class="t" style="left:883.00px;top:849.10px;font-size:11.7px;color:#c4c4c4;font-weight:normal;">Text</div>
<div class="t" style="left:883.00px;top:864.10px;font-size:11.7px;color:#c4c4c4;font-weight:normal;">Alignment</div>
<div class="a" style="left:960px;top:846px;width:230px;height:32px;border:1px solid #2b2c2f;border-radius:5px;background:#18191b;overflow:hidden"><div class="a" style="left:57.0px;top:0;width:57.0px;height:30px;background:#222527"></div></div>
<svg style="left:960px;top:846px;" width="230" height="32" viewBox="960 846 230 32"><path d="M982 856.6 H992.7" stroke="#d6d6d6" stroke-width="1.1"/><path d="M982 861.8 H996.1" stroke="#d6d6d6" stroke-width="1.1"/><path d="M982 867 H990" stroke="#d6d6d6" stroke-width="1.1"/><path d="M1042.7 856.6 H1051.7" stroke="#d6d6d6" stroke-width="1.1"/><path d="M1039.8 861.8 H1054.4" stroke="#d6d6d6" stroke-width="1.1"/><path d="M1042.7 867 H1051.7" stroke="#d6d6d6" stroke-width="1.1"/><path d="M1100.3 856.6 H1111.1" stroke="#d6d6d6" stroke-width="1.1"/><path d="M1097 861.8 H1111.1" stroke="#d6d6d6" stroke-width="1.1"/><path d="M1103.3 867 H1111.1" stroke="#d6d6d6" stroke-width="1.1"/><path d="M1153.7 856.6 H1168.3" stroke="#d6d6d6" stroke-width="1.1"/><path d="M1153.7 861.8 H1168.3" stroke="#d6d6d6" stroke-width="1.1"/><path d="M1153.7 867 H1168.3" stroke="#d6d6d6" stroke-width="1.1"/></svg>
<div class="a" style="left:1039.1px;top:874.5px;width:16.90000000000009px;height:2.5px;background:#6cb8f2;border-radius:1.5px;"></div>
<div class="t" style="left:1204.60px;top:850.27px;font-size:20px;color:#d0d0d0;font-weight:normal;font-family:'Liberation Serif',serif;font-style:italic">x</div>
<svg style="left:1213px;top:859px;" width="16" height="8" viewBox="1213 859 16 8"><path d="M1217.0 861.0 L1221 865.0 L1225.0 861.0" fill="none" stroke="#c8c8c8" stroke-width="1.1"/></svg>
<div class="t" style="left:883.00px;top:889.10px;font-size:11.7px;color:#c4c4c4;font-weight:normal;">Text</div>
<div class="t" style="left:883.00px;top:904.10px;font-size:11.7px;color:#c4c4c4;font-weight:normal;">Wrapping</div>
<div class="a" style="left:960px;top:886px;width:230px;height:30px;background:#252628;border-radius:4px;"></div>
<div class="t" style="left:968.00px;top:897.02px;font-size:11.2px;color:#eeeeee;font-weight:bold;-webkit-text-stroke:0.1px currentColor;">NoWrap</div>
<svg style="left:1167.6px;top:895.9px;" width="20" height="11.0" viewBox="1167.6 895.9 20 11.0"><path d="M1172.6 898.65 L1177.6 904.15 L1182.6 898.65" fill="none" stroke="#d8d8d8" stroke-width="1.3"/></svg>
<svg style="left:1120px;top:430px;" width="16" height="20" viewBox="1120 430 16 20"><path d="M1123.2 432 V446.5 L1126.6 443.3 L1129.2 448.6 L1131.3 447.6 L1128.8 442.4 L1133.4 442.2 Z" fill="#fff" stroke="#000" stroke-width="0.8" stroke-linejoin="round"/></svg>
</body></html>
